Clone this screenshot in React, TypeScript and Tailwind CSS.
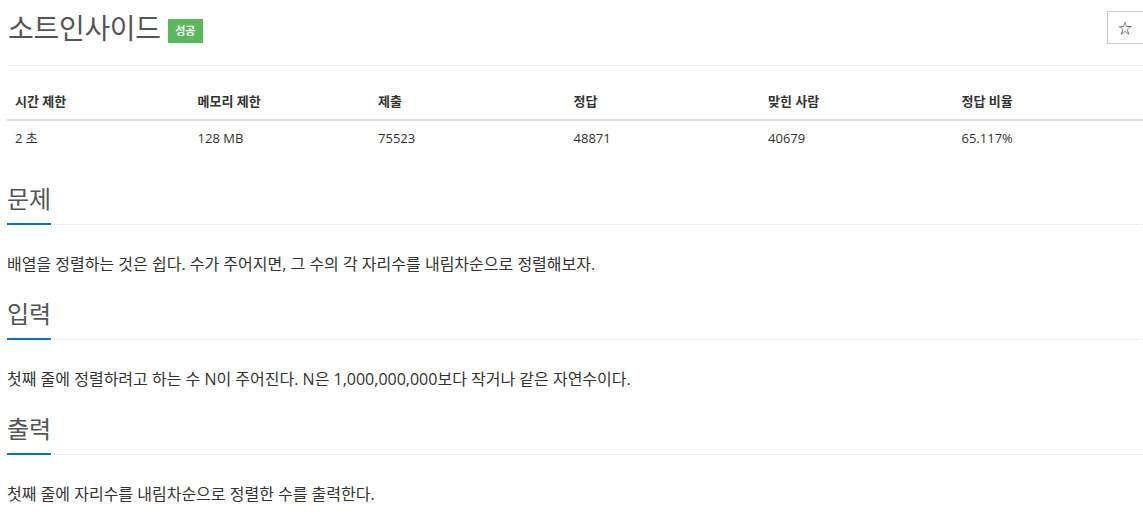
import React from "react";

const font = { fontFamily: '"Open Sans", "Noto Sans CJK KR", sans-serif' };

const cols = [
  { h: "시간 제한", v: "2 초", w: "w-[183px]" },
  { h: "메모리 제한", v: "128 MB", w: "w-[181px]" },
  { h: "제출", v: "75523", w: "w-[196px]" },
  { h: "정답", v: "48871", w: "w-[195px]" },
  { h: "맞힌 사람", v: "40679", w: "w-[194px]" },
  { h: "정답 비율", v: "65.117%", w: "w-[190px]" },
];

function Section({ title, text, first }: { title: string; text: string; first?: boolean }) {
  return (
    <section className={first ? "mt-[27px]" : "mt-[22px]"}>
      <div className="border-b border-dotted border-[#dde3ea]">
        <h2 className="inline-block text-[24px] leading-[32px] pb-[8px] border-b-2 border-[#0076c0] -mb-px text-[#555] font-normal">
          {title}
        </h2>
      </div>
      <p className="mt-[27px] text-[16px] leading-[24px] text-[#333]">{text}</p>
    </section>
  );
}

export default function App() {
  return (
    <div className="w-[1143px] h-[516px] overflow-hidden bg-white" style={font}>
      <div className="ml-[7px] w-[1150px]">
        <div className="flex items-start justify-between pt-[8px]">
          <div className="flex items-center h-[40px] pl-[1px]">
            <h1 className="text-[28px] leading-[40px] text-[#555] font-normal tracking-[-0.3px]">소트인사이드</h1>
            <span className="ml-[7px] mt-[6px] inline-flex items-center justify-center w-[35px] h-[24px] bg-[#5cb85c] text-white text-[11px] font-bold">
              성공
            </span>
          </div>
          <button className="mt-[3px] mr-[7px] w-[43px] h-[33px] border border-[#ccc] bg-white text-[#333] text-[14px] flex items-center justify-center pr-[7px]">
            ☆
          </button>
        </div>
        <div className="mt-[17px] h-px bg-[#eee] w-[1136px]" />
        <div className="mt-[19px] w-[1136px] text-[13px] text-[#333]">
          <div className="flex h-[36px] items-center border-b-2 border-[#ddd]">
            {cols.map((c) => (
              <div key={c.h} className={`${c.w} px-[8px] font-bold`}>
                {c.h}
              </div>
            ))}
          </div>
          <div className="flex h-[35px] items-center">
            {cols.map((c) => (
              <div key={c.h} className={`${c.w} px-[8px]`}>
                {c.v}
              </div>
            ))}
          </div>
        </div>
        <div className="w-[1136px]">
          <Section
            first
            title="문제"
            text="배열을 정렬하는 것은 쉽다. 수가 주어지면, 그 수의 각 자리수를 내림차순으로 정렬해보자."
          />
          <Section
            title="입력"
            text="첫째 줄에 정렬하려고 하는 수 N이 주어진다. N은 1,000,000,000보다 작거나 같은 자연수이다."
          />
          <Section title="출력" text="첫째 줄에 자리수를 내림차순으로 정렬한 수를 출력한다." />
        </div>
      </div>
    </div>
  );
}
